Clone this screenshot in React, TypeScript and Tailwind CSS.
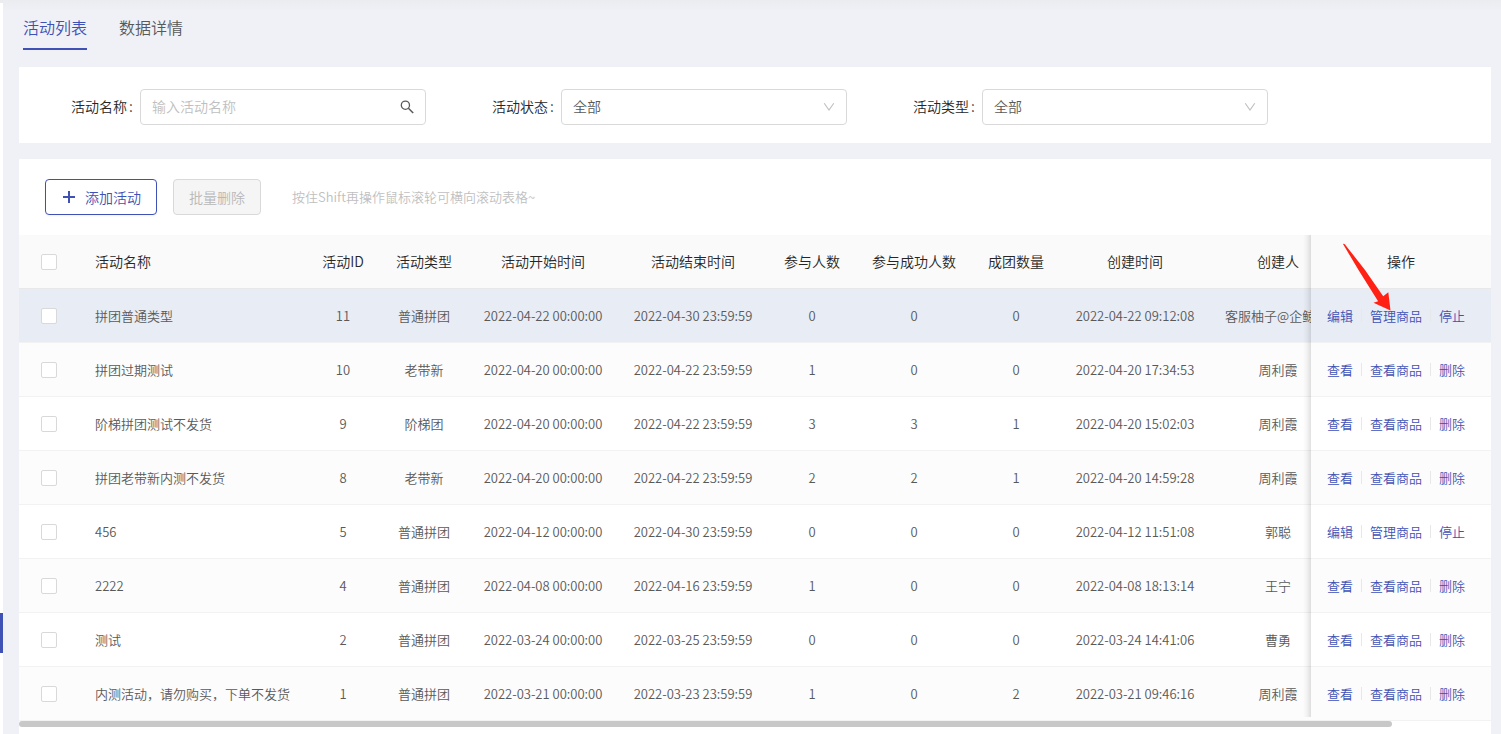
import { Fragment } from 'react';

type Activity = {
  id: number;
  name: string;
  type: string;
  start: string;
  end: string;
  joined: number;
  succeeded: number;
  groups: number;
  created: string;
  creator: string;
  running?: boolean;
};

const activities: Activity[] = [
  { id: 11, name: '拼团普通类型', type: '普通拼团', start: '2022-04-22 00:00:00', end: '2022-04-30 23:59:59', joined: 0, succeeded: 0, groups: 0, created: '2022-04-22 09:12:08', creator: '客服柚子@企鲸', running: true },
  { id: 10, name: '拼团过期测试', type: '老带新', start: '2022-04-20 00:00:00', end: '2022-04-22 23:59:59', joined: 1, succeeded: 0, groups: 0, created: '2022-04-20 17:34:53', creator: '周利霞' },
  { id: 9, name: '阶梯拼团测试不发货', type: '阶梯团', start: '2022-04-20 00:00:00', end: '2022-04-22 23:59:59', joined: 3, succeeded: 3, groups: 1, created: '2022-04-20 15:02:03', creator: '周利霞' },
  { id: 8, name: '拼团老带新内测不发货', type: '老带新', start: '2022-04-20 00:00:00', end: '2022-04-22 23:59:59', joined: 2, succeeded: 2, groups: 1, created: '2022-04-20 14:59:28', creator: '周利霞' },
  { id: 5, name: '456', type: '普通拼团', start: '2022-04-12 00:00:00', end: '2022-04-30 23:59:59', joined: 0, succeeded: 0, groups: 0, created: '2022-04-12 11:51:08', creator: '郭聪', running: true },
  { id: 4, name: '2222', type: '普通拼团', start: '2022-04-08 00:00:00', end: '2022-04-16 23:59:59', joined: 1, succeeded: 0, groups: 0, created: '2022-04-08 18:13:14', creator: '王宁' },
  { id: 2, name: '测试', type: '普通拼团', start: '2022-03-24 00:00:00', end: '2022-03-25 23:59:59', joined: 0, succeeded: 0, groups: 0, created: '2022-03-24 14:41:06', creator: '曹勇' },
  { id: 1, name: '内测活动，请勿购买，下单不发货', type: '普通拼团', start: '2022-03-21 00:00:00', end: '2022-03-23 23:59:59', joined: 1, succeeded: 0, groups: 2, created: '2022-03-21 09:46:16', creator: '周利霞' },
];

const headers = ['活动ID', '活动类型', '活动开始时间', '活动结束时间', '参与人数', '参与成功人数', '成团数量', '创建时间', '创建人'];

const Checkbox = ({ label }: { label: string }) => (
  <input
    type="checkbox"
    aria-label={label}
    className="block mx-auto size-4 appearance-none rounded-xs border border-[#d9d9d9] bg-white checked:bg-[#3f51b5]"
  />
);

const SelectField = ({ id, label }: { id: string; label: string }) => (
  <div className="flex flex-1 items-center">
    <label htmlFor={id} className="w-[69px] shrink-0 pb-0.5 text-[#262626]">{label}<span className="ml-[2px]">:</span></label>
    <div className="relative flex-1">
      <select id={id} className="block h-9 w-full appearance-none rounded border border-[#d9d9d9] bg-white pb-0.5 pl-[11px] pr-8 text-[#595959]">
        <option>全部</option>
      </select>
      <svg className="pointer-events-none absolute right-3 top-3 size-3" viewBox="0 0 12 12" fill="none" stroke="#bfbfbf" strokeWidth="1.1">
        <path d="M1.2 2.2 6 9l4.8-6.8" />
      </svg>
    </div>
  </div>
);

const App = () => {
  return (
    <div className="flex min-h-screen bg-[#f0f1f6] text-sm leading-5 font-[350] font-['Noto_Sans_CJK_SC',sans-serif]">
      <aside className="w-[3px] shrink-0 bg-white">
        <div className="h-[3px] bg-[#ebecf0]" />
        <div className="mt-[610px] h-10 bg-[#3f51b5]" />
      </aside>

      <main className="flex min-w-0 flex-1 flex-col bg-linear-to-b from-[#ebecf0] to-[#f0f1f6] to-[12px] pl-4 pr-[10px]">
        <nav className="flex gap-8 px-1 pt-[15px] text-base leading-6">
          <a href="#list" className="border-b-2 border-[#3f51b5] pb-[9px] text-[#3f51b5]">活动列表</a>
          <a href="#data" className="pb-[9px] text-[#595959]">数据详情</a>
        </nav>

        <form className="mt-[17px] flex gap-[66px] bg-white pt-[22px] pb-[18px] pl-[52px] pr-[223px]">
          <div className="flex flex-1 items-center">
            <label htmlFor="name" className="w-[69px] shrink-0 pb-0.5 text-[#262626]">活动名称<span className="ml-[2px]">:</span></label>
            <div className="relative flex-1">
              <input id="name" placeholder="输入活动名称" className="block h-9 w-full rounded border border-[#d9d9d9] pb-0.5 pl-[11px] pr-9 placeholder:text-[#bfbfbf]" />
              <button type="button" aria-label="搜索" className="absolute right-3 top-[11px]">
                <svg className="size-[14px]" viewBox="0 0 14 14" fill="none" stroke="#595959" strokeWidth="1.3">
                  <circle cx="5.4" cy="5.2" r="4.1" />
                  <path d="m8.4 8.2 4.8 4.8" strokeWidth="1.5" />
                </svg>
              </button>
            </div>
          </div>
          <SelectField id="status" label="活动状态" />
          <SelectField id="type" label="活动类型" />
        </form>

        <section className="mt-4 flex-1 bg-white">
          <div className="flex items-center px-[26px] py-5">
            <button className="flex h-9 items-center rounded border border-[#3f51b5] px-[15px] text-[#3f51b5] shadow-xs">
              <svg className="mr-2 size-4" viewBox="0 0 16 16" stroke="#3f51b5" strokeWidth="2">
                <path d="M2 8h12M8 2v12" />
              </svg>
              添加活动
            </button>
            <button disabled className="ml-4 h-9 rounded border border-[#d9d9d9] bg-[#f5f5f5] px-[15px] text-[#b8b8b8]">批量删除</button>
            <p className="ml-[31px] text-[13px] text-[#bfbfbf]">按住Shift再操作鼠标滚轮可横向滚动表格~</p>
          </div>

          <div className="relative">
            <div className="overflow-x-auto [scrollbar-width:none]">
              <table className="w-full min-w-[1507px] table-fixed border-separate border-spacing-0 text-center text-[13px] whitespace-nowrap text-[#595959]">
                <colgroup>
                  <col className="w-[60px]" />
                  <col />
                  <col className="w-[74px]" />
                  <col className="w-[88px]" />
                  <col className="w-[150px]" />
                  <col className="w-[150px]" />
                  <col className="w-[88px]" />
                  <col className="w-[116px]" />
                  <col className="w-[88px]" />
                  <col className="w-[150px]" />
                  <col className="w-[136px]" />
                  <col className="w-[180px]" />
                </colgroup>
                <thead>
                  <tr className="h-[54px] text-sm text-[#262626] *:border-b *:border-[#e8e8e8] *:bg-[#fafafa] *:font-[350]">
                    <th><Checkbox label="全选" /></th>
                    <th className="px-4 pb-0.5 text-left">活动名称</th>
                    {headers.map((header) => (
                      <th key={header} className="pb-0.5">{header}</th>
                    ))}
                    <th className="sticky right-0 pb-0.5">操作</th>
                  </tr>
                </thead>
                <tbody>
                  {activities.map((row, index) => {
                    const actions = row.running ? ['编辑', '管理商品', '停止'] : ['查看', '查看商品', '删除'];
                    const background = index === 0 ? '*:bg-[#e8ecf5]' : index % 2 ? '*:bg-[#fcfcfc]' : '*:bg-white';
                    return (
                      <tr key={row.id} className={`h-[54px] *:border-b *:border-[#f2f2f2] ${background}`}>
                        <td><Checkbox label={row.name} /></td>
                        <td className="px-4 text-left">{row.name}</td>
                        <td>{row.id}</td>
                        <td>{row.type}</td>
                        <td>{row.start}</td>
                        <td>{row.end}</td>
                        <td>{row.joined}</td>
                        <td>{row.succeeded}</td>
                        <td>{row.groups}</td>
                        <td>{row.created}</td>
                        <td className={index === 0 ? 'px-[15px] text-left' : ''}>{row.creator}</td>
                        <td className="sticky right-0">
                          <div className="flex items-center gap-2 pl-4">
                            {actions.map((action, i) => (
                              <Fragment key={action}>
                                {i > 0 && <span className="h-[13px] w-px bg-[#e8e8e8]" />}
                                <a href={`#${row.id}`} className="text-[#3f51b5]">{action}</a>
                              </Fragment>
                            ))}
                          </div>
                        </td>
                      </tr>
                    );
                  })}
                </tbody>
              </table>
            </div>
            {/* shadow of the fixed column */}
            <div className="pointer-events-none absolute top-0 right-[180px] bottom-1 w-2 bg-linear-to-l from-black/12 via-black/4 to-transparent" />
            <svg className="pointer-events-none absolute top-2 right-[100px] h-[68px] w-[49px]" viewBox="0 0 49 68" fill="#ff2114">
              <path d="M1 1q1-.6 2 .4L23 27 41.2 53.2 46.3 49.3 48.5 67.5 31.5 59.7l4.6-1.4L16.5 27Z" />
            </svg>
          </div>
          <div className="h-[6px] w-[93.3%] rounded-full bg-[#c8c8c8]" />
        </section>
      </main>
    </div>
  );
};

export default App;
